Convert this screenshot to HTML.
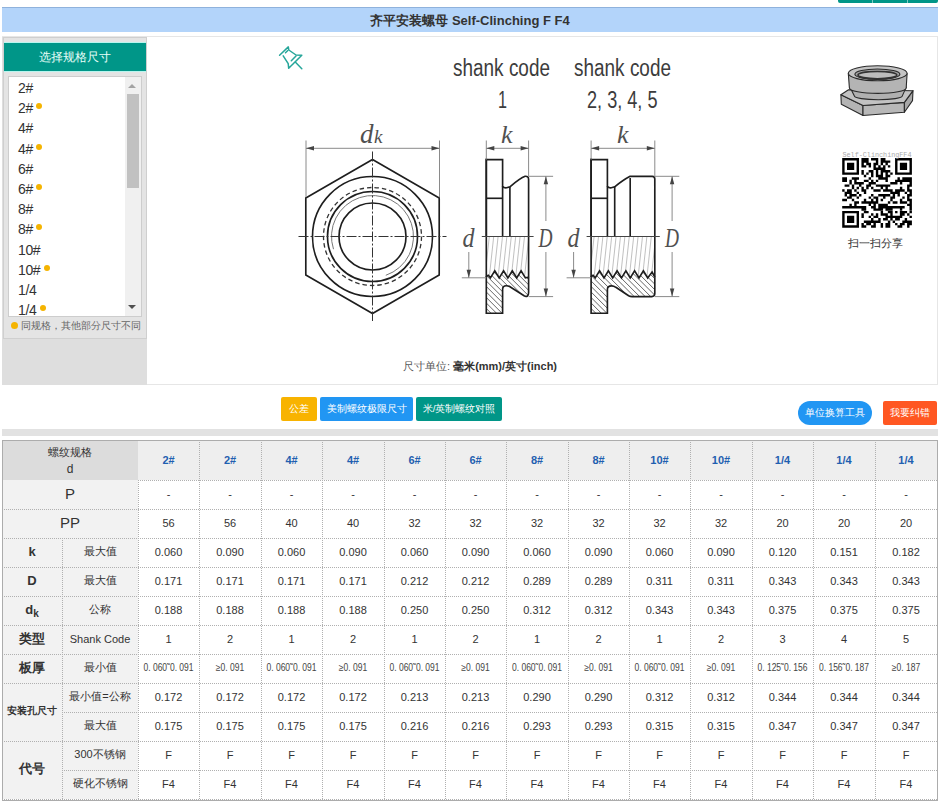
<!DOCTYPE html>
<html><head><meta charset="utf-8">
<style>
*{margin:0;padding:0;box-sizing:border-box}
html,body{width:943px;height:801px;overflow:hidden;background:#fff;font-family:"Liberation Sans",sans-serif;color:#333}
.abs{position:absolute}
#tabs{left:838px;top:0;width:100px;height:3px;background:#009688;border-radius:0 0 2px 2px}
#tabs i{position:absolute;top:0;width:1px;height:3px;background:#7fcac3}
#title{left:2px;top:7px;width:936px;height:25px;background:#b3d4fa;border-top:1px solid #8fb2dc;font-size:13px;font-weight:bold;text-align:center;line-height:26px;color:#333}
#box{left:2px;top:36px;width:936px;height:349px;border:1px solid #e6e6e6;background:#fff}
#leftcol{left:2px;top:37px;width:145px;height:348px;background:#dedede}
#panel{left:3px;top:37px;width:144px;height:302px;background:#e4e4e4;border:1px solid #cfcfcf}
#ghead{left:4px;top:42px;width:142px;height:30px;background:#009688;border-top:1px solid #b8f5ee;border-bottom:1px solid #b8f5ee;color:#e8fff8;font-size:12.2px;text-align:center;line-height:28px}
#list{left:8px;top:76px;width:134px;height:241px;background:#fff;border:1px solid #cdcdcd}
#list .it{position:absolute;left:9px;font-size:14px;color:#333;line-height:16px;letter-spacing:-0.4px}
#list .dot{display:inline-block;width:6px;height:6px;border-radius:50%;background:#f5b400;vertical-align:top;margin-left:3.5px;margin-top:3px}
#sb{left:125px;top:77px;width:16px;height:239px;background:#f0f0f0}
#thumb{left:127px;top:94px;width:12px;height:94px;background:#c1c1c1}
#legend{left:11px;top:320px;font-size:9.6px;color:#666;white-space:nowrap}
#legend b{display:inline-block;width:7px;height:7px;border-radius:50%;background:#f5b400;vertical-align:middle;margin-right:3px;position:relative;top:-1px}
.btn{position:absolute;color:#fff;font-size:9.6px;text-align:center;line-height:23px;height:24px;border-radius:2px;white-space:nowrap}
table{position:absolute;left:2px;top:440px;border-collapse:collapse;table-layout:fixed;width:936px}
.r{position:absolute}
.hd{position:absolute;height:0;border-top:1px dotted #b0b0b0}
.vd{position:absolute;width:0;border-left:1px dotted #b0b0b0}
.ob{position:absolute;border:1px solid #acacac}
.t{position:absolute;display:flex;align-items:center;justify-content:center;text-align:center;white-space:nowrap;color:#333}
.hb{font-weight:bold;color:#1f5fb0;font-size:11px}
.hl{font-size:11px;line-height:17px;padding-top:2px}
.hl b{font-weight:normal;font-size:12px}
.lp,.lb,.lbs,.ls,.dv,.dm{padding-bottom:2px}
.lp{font-size:15px}
.lb{font-size:13px;font-weight:bold}
.lbs{font-size:10px;font-weight:bold}
.ls{font-size:11px}
.dv{font-size:11px}
.dm{font-size:10px;transform:scaleX(0.85);color:#444}
.sb{font-size:10px;position:relative;top:4px}
</style></head>
<body>
<div id="tabs" class="abs"><i style="left:34px"></i><i style="left:69px"></i></div>
<div id="title" class="abs">齐平安装螺母 Self-Clinching F F4</div>
<div id="box" class="abs"></div>
<div id="leftcol" class="abs"></div>
<div id="panel" class="abs"></div>
<div id="ghead" class="abs">选择规格尺寸</div>
<div id="list" class="abs"><div class="it" style="top:3.0px">2#</div><div class="it" style="top:23.2px">2#<span class="dot"></span></div><div class="it" style="top:43.4px">4#</div><div class="it" style="top:63.6px">4#<span class="dot"></span></div><div class="it" style="top:83.8px">6#</div><div class="it" style="top:104.0px">6#<span class="dot"></span></div><div class="it" style="top:124.2px">8#</div><div class="it" style="top:144.4px">8#<span class="dot"></span></div><div class="it" style="top:164.6px">10#</div><div class="it" style="top:184.8px">10#<span class="dot"></span></div><div class="it" style="top:205.0px">1/4</div><div class="it" style="top:225.2px">1/4<span class="dot"></span></div></div>
<div id="sb" class="abs"></div>
<div id="thumb" class="abs"></div>
<div id="legend" class="abs"><b></b>同规格，其他部分尺寸不同</div>

<svg class="abs" style="left:0;top:0" width="943" height="801" viewBox="0 0 943 801"><path d="M372.5,159.5 L439.2,198.0 L439.2,275.0 L372.5,313.5 L305.8,275.0 L305.8,198.0 Z" stroke="#1e1e1e" stroke-width="1.65" fill="none"/>
<circle cx="372.5" cy="236.5" r="60" stroke="#1e1e1e" stroke-width="1.65" fill="none"/>
<circle cx="372.5" cy="236.5" r="45" stroke="#1e1e1e" stroke-width="1.65" fill="none"/>
<circle cx="372.5" cy="236.5" r="33.5" stroke="#1e1e1e" stroke-width="1.65" fill="none"/>
<circle cx="372.5" cy="236.5" r="49" stroke="#333" stroke-width="1.3" fill="none" stroke-dasharray="4.5 3"/>
<path d="M333.5,249.2 A41,41 0 1 1 385.8,275.3" stroke="#777" stroke-width="1" fill="none"/>
<line x1="298.5" y1="236.5" x2="446.5" y2="236.5" stroke="#333" stroke-width="1" fill="none" stroke-dasharray="10 2 2 2"/>
<line x1="372.5" y1="151.5" x2="372.5" y2="321" stroke="#333" stroke-width="1" fill="none" stroke-dasharray="10 2 2 2"/>
<line x1="306" y1="140.5" x2="306" y2="197" stroke="#8a8a8a" stroke-width="1" fill="none"/>
<line x1="439.5" y1="140.5" x2="439.5" y2="197" stroke="#8a8a8a" stroke-width="1" fill="none"/>
<line x1="306" y1="148.3" x2="439.5" y2="148.3" stroke="#8a8a8a" stroke-width="1" fill="none"/>
<path d="M306,148.3 l8,-2.2 l0,4.4 Z" fill="#444"/>
<path d="M439.5,148.3 l-8,-2.2 l0,4.4 Z" fill="#444"/>
<path d="M486.3,236.5 L486.3,159.6 L502.6,159.6 L502.6,186.5" stroke="#1e1e1e" stroke-width="1.65" fill="none"/>
<line x1="486.3" y1="198.3" x2="502.6" y2="198.3" stroke="#1e1e1e" stroke-width="1.65" fill="none"/>
<line x1="502.6" y1="186" x2="502.6" y2="236.5" stroke="#1e1e1e" stroke-width="1.65" fill="none"/>
<path d="M502.6,186.5 Q503.6,188 506.6,187.8 L509.90000000000003,186.8 Q520.3,178 525.1,176.3 Q528.6,176 528.6,179.5 L528.6,236.5" stroke="#1e1e1e" stroke-width="1.65" fill="none"/>
<line x1="509.90000000000003" y1="187" x2="509.90000000000003" y2="236.5" stroke="#1e1e1e" stroke-width="1.65" fill="none"/>
<line x1="486.3" y1="158.6" x2="486.3" y2="236.5" stroke="#1e1e1e" stroke-width="1.65" fill="none"/>
<clipPath id="c486a"><path d="M486.3,236.5 L528.6,236.5 L528.6,277.2 L525.4,277.9 L521.1,270.8 L516.7,277.9 L512.3,270.8 L507.9,277.9 L503.6,270.8 L499.2,277.9 L494.8,270.8 L490.4,277.9 L488.3,275.3 L486.3,276.2 Z"/></clipPath>
<clipPath id="c486b"><path d="M486.3,276.2 L486.3,313.2 L502.6,313.2 L502.6,289.5 Q502.6,285.7 506.1,285.7 Q508.1,285.7 509.6,286.5 L524.1,295.8 Q526.1,297 527.4,296 Q528.6,295 528.6,292.5 L528.6,277.2 L528.6,277.2 L525.4,277.9 L521.1,270.8 L516.7,277.9 L512.3,270.8 L507.9,277.9 L503.6,270.8 L499.2,277.9 L494.8,270.8 L490.4,277.9 L488.3,275.3 L486.3,276.2 Z"/></clipPath>
<g clip-path="url(#c486a)" stroke="#b0b0b0" stroke-width="0.8"><line x1="476.1" y1="236.5" x2="471.6" y2="278" /><line x1="480.5" y1="236.5" x2="476.0" y2="278" /><line x1="484.9" y1="236.5" x2="480.4" y2="278" /><line x1="489.3" y1="236.5" x2="484.8" y2="278" /><line x1="493.7" y1="236.5" x2="489.2" y2="278" /><line x1="498.1" y1="236.5" x2="493.6" y2="278" /><line x1="502.5" y1="236.5" x2="498.0" y2="278" /><line x1="506.9" y1="236.5" x2="502.4" y2="278" /><line x1="511.3" y1="236.5" x2="506.8" y2="278" /><line x1="515.7" y1="236.5" x2="511.2" y2="278" /><line x1="520.1" y1="236.5" x2="515.6" y2="278" /><line x1="524.5" y1="236.5" x2="520.0" y2="278" /><line x1="528.9" y1="236.5" x2="524.4" y2="278" /><line x1="533.3" y1="236.5" x2="528.8" y2="278" /><line x1="537.7" y1="236.5" x2="533.2" y2="278" /><line x1="542.1" y1="236.5" x2="537.6" y2="278" /><line x1="546.5" y1="236.5" x2="542.0" y2="278" /><line x1="550.9" y1="236.5" x2="546.4" y2="278" /><line x1="555.3" y1="236.5" x2="550.8" y2="278" /><line x1="559.7" y1="236.5" x2="555.2" y2="278" /><line x1="564.1" y1="236.5" x2="559.6" y2="278" /><line x1="568.5" y1="236.5" x2="564.0" y2="278" /><line x1="572.9" y1="236.5" x2="568.4" y2="278" /></g>
<g clip-path="url(#c486b)" stroke="#555" stroke-width="0.9"><line x1="420.3" y1="270" x2="464.3" y2="314" /><line x1="425.8" y1="270" x2="469.8" y2="314" /><line x1="431.3" y1="270" x2="475.3" y2="314" /><line x1="436.8" y1="270" x2="480.8" y2="314" /><line x1="442.3" y1="270" x2="486.3" y2="314" /><line x1="447.8" y1="270" x2="491.8" y2="314" /><line x1="453.3" y1="270" x2="497.3" y2="314" /><line x1="458.8" y1="270" x2="502.8" y2="314" /><line x1="464.3" y1="270" x2="508.3" y2="314" /><line x1="469.8" y1="270" x2="513.8" y2="314" /><line x1="475.3" y1="270" x2="519.3" y2="314" /><line x1="480.8" y1="270" x2="524.8" y2="314" /><line x1="486.3" y1="270" x2="530.3" y2="314" /><line x1="491.8" y1="270" x2="535.8" y2="314" /><line x1="497.3" y1="270" x2="541.3" y2="314" /><line x1="502.8" y1="270" x2="546.8" y2="314" /><line x1="508.3" y1="270" x2="552.3" y2="314" /><line x1="513.8" y1="270" x2="557.8" y2="314" /><line x1="519.3" y1="270" x2="563.3" y2="314" /><line x1="524.8" y1="270" x2="568.8" y2="314" /><line x1="530.3" y1="270" x2="574.3" y2="314" /><line x1="535.8" y1="270" x2="579.8" y2="314" /><line x1="541.3" y1="270" x2="585.3" y2="314" /><line x1="546.8" y1="270" x2="590.8" y2="314" /><line x1="552.3" y1="270" x2="596.3" y2="314" /><line x1="557.8" y1="270" x2="601.8" y2="314" /><line x1="563.3" y1="270" x2="607.3" y2="314" /><line x1="568.8" y1="270" x2="612.8" y2="314" /><line x1="574.3" y1="270" x2="618.3" y2="314" /><line x1="579.8" y1="270" x2="623.8" y2="314" /></g>
<path d="M486.3,276.2 L488.3,275.3 L490.4,277.9 L494.8,270.8 L499.2,277.9 L503.6,270.8 L507.9,277.9 L512.3,270.8 L516.7,277.9 L521.1,270.8 L525.4,277.9 L528.6,277.2" stroke="#1e1e1e" stroke-width="1.65" fill="none"/>
<path d="M486.3,276.2 L486.3,313.2 L502.6,313.2 L502.6,289.5 Q502.6,285.7 506.1,285.7 Q508.1,285.7 509.6,286.5 L524.1,295.8 Q526.1,297 527.4,296 Q528.6,295 528.6,292.5 L528.6,277.2" stroke="#1e1e1e" stroke-width="1.65" fill="none"/>
<line x1="486.3" y1="236.5" x2="486.3" y2="277" stroke="#1e1e1e" stroke-width="1.65" fill="none"/>
<line x1="528.6" y1="236.5" x2="528.6" y2="277.5" stroke="#1e1e1e" stroke-width="1.65" fill="none"/>
<line x1="481.8" y1="236.5" x2="533.6" y2="236.5" stroke="#444" stroke-width="1"/>
<line x1="486.3" y1="140.5" x2="486.3" y2="159.6" stroke="#8a8a8a" stroke-width="1" fill="none"/>
<line x1="528.6" y1="140.5" x2="528.6" y2="176.3" stroke="#8a8a8a" stroke-width="1" fill="none"/>
<line x1="486.3" y1="148.3" x2="528.6" y2="148.3" stroke="#8a8a8a" stroke-width="1" fill="none"/>
<path d="M486.3,148.3 l8,-2.2 l0,4.4 Z" fill="#444"/>
<path d="M528.6,148.3 l-8,-2.2 l0,4.4 Z" fill="#444"/>
<line x1="528.6" y1="176.3" x2="553.1" y2="176.3" stroke="#8a8a8a" stroke-width="1" fill="none"/>
<line x1="528.6" y1="296.6" x2="553.1" y2="296.6" stroke="#8a8a8a" stroke-width="1" fill="none"/>
<line x1="545.9" y1="176.3" x2="545.9" y2="221" stroke="#8a8a8a" stroke-width="1" fill="none"/>
<path d="M545.9,176.3 l-2.2,8 l4.4,0 Z" fill="#444"/>
<line x1="545.9" y1="252" x2="545.9" y2="296.6" stroke="#8a8a8a" stroke-width="1" fill="none"/>
<path d="M545.9,296.6 l-2.2,-8 l4.4,0 Z" fill="#444"/>
<line x1="461.8" y1="277.8" x2="486.3" y2="277.8" stroke="#8a8a8a" stroke-width="1" fill="none"/>
<line x1="468.8" y1="252" x2="468.8" y2="277.8" stroke="#8a8a8a" stroke-width="1" fill="none"/>
<path d="M468.8,277.8 l-2.2,-8 l4.4,0 Z" fill="#444"/>
<path d="M591.1,236.5 L591.1,159.6 L607.4,159.6 L607.4,186.5" stroke="#1e1e1e" stroke-width="1.65" fill="none"/>
<line x1="591.1" y1="198.3" x2="607.4" y2="198.3" stroke="#1e1e1e" stroke-width="1.65" fill="none"/>
<line x1="607.4" y1="186" x2="607.4" y2="236.5" stroke="#1e1e1e" stroke-width="1.65" fill="none"/>
<path d="M607.4,186.5 Q608.4,188 611.4,187.8 L614.6999999999999,186.8 Q623.1,180 630.1,176.3 L652.3000000000001,176.3 Q654.8000000000001,176.3 654.8000000000001,179 L654.8000000000001,236.5" stroke="#1e1e1e" stroke-width="1.65" fill="none"/>
<line x1="614.7" y1="187" x2="614.7" y2="236.5" stroke="#1e1e1e" stroke-width="1.65" fill="none"/>
<line x1="630.2" y1="178" x2="630.2" y2="236.5" stroke="#1e1e1e" stroke-width="1.65" fill="none"/>
<line x1="591.1" y1="158.6" x2="591.1" y2="236.5" stroke="#1e1e1e" stroke-width="1.65" fill="none"/>
<clipPath id="c591a"><path d="M591.1,236.5 L654.8000000000001,236.5 L654.8,277.2 L652.1,272.0 L647.7,277.9 L643.4,270.8 L639.0,277.9 L634.6,270.8 L630.2,277.9 L625.9,270.8 L621.5,277.9 L617.1,270.8 L612.7,277.9 L608.4,270.8 L604.0,277.9 L599.6,270.8 L595.2,277.9 L593.1,275.3 L591.1,276.2 Z"/></clipPath>
<clipPath id="c591b"><path d="M591.1,276.2 L591.1,313.2 L607.4,313.2 L607.4,289.5 Q607.4,285.8 611.4,285.8 Q613.9,285.8 615.9,287.3 L628.6,295.8 Q630.1,296.6 632.1,296.6 L651.8000000000001,296.6 Q654.8000000000001,296.6 654.8000000000001,293.6 L654.8000000000001,277.2 L654.8,277.2 L652.1,272.0 L647.7,277.9 L643.4,270.8 L639.0,277.9 L634.6,270.8 L630.2,277.9 L625.9,270.8 L621.5,277.9 L617.1,270.8 L612.7,277.9 L608.4,270.8 L604.0,277.9 L599.6,270.8 L595.2,277.9 L593.1,275.3 L591.1,276.2 Z"/></clipPath>
<g clip-path="url(#c591a)" stroke="#b0b0b0" stroke-width="0.8"><line x1="580.9" y1="236.5" x2="576.4" y2="278" /><line x1="585.3" y1="236.5" x2="580.8" y2="278" /><line x1="589.7" y1="236.5" x2="585.2" y2="278" /><line x1="594.1" y1="236.5" x2="589.6" y2="278" /><line x1="598.5" y1="236.5" x2="594.0" y2="278" /><line x1="602.9" y1="236.5" x2="598.4" y2="278" /><line x1="607.3" y1="236.5" x2="602.8" y2="278" /><line x1="611.7" y1="236.5" x2="607.2" y2="278" /><line x1="616.1" y1="236.5" x2="611.6" y2="278" /><line x1="620.5" y1="236.5" x2="616.0" y2="278" /><line x1="624.9" y1="236.5" x2="620.4" y2="278" /><line x1="629.3" y1="236.5" x2="624.8" y2="278" /><line x1="633.7" y1="236.5" x2="629.2" y2="278" /><line x1="638.1" y1="236.5" x2="633.6" y2="278" /><line x1="642.5" y1="236.5" x2="638.0" y2="278" /><line x1="646.9" y1="236.5" x2="642.4" y2="278" /><line x1="651.3" y1="236.5" x2="646.8" y2="278" /><line x1="655.7" y1="236.5" x2="651.2" y2="278" /><line x1="660.1" y1="236.5" x2="655.6" y2="278" /><line x1="664.5" y1="236.5" x2="660.0" y2="278" /><line x1="668.9" y1="236.5" x2="664.4" y2="278" /><line x1="673.3" y1="236.5" x2="668.8" y2="278" /><line x1="677.7" y1="236.5" x2="673.2" y2="278" /></g>
<g clip-path="url(#c591b)" stroke="#555" stroke-width="0.9"><line x1="525.1" y1="270" x2="569.1" y2="314" /><line x1="530.6" y1="270" x2="574.6" y2="314" /><line x1="536.1" y1="270" x2="580.1" y2="314" /><line x1="541.6" y1="270" x2="585.6" y2="314" /><line x1="547.1" y1="270" x2="591.1" y2="314" /><line x1="552.6" y1="270" x2="596.6" y2="314" /><line x1="558.1" y1="270" x2="602.1" y2="314" /><line x1="563.6" y1="270" x2="607.6" y2="314" /><line x1="569.1" y1="270" x2="613.1" y2="314" /><line x1="574.6" y1="270" x2="618.6" y2="314" /><line x1="580.1" y1="270" x2="624.1" y2="314" /><line x1="585.6" y1="270" x2="629.6" y2="314" /><line x1="591.1" y1="270" x2="635.1" y2="314" /><line x1="596.6" y1="270" x2="640.6" y2="314" /><line x1="602.1" y1="270" x2="646.1" y2="314" /><line x1="607.6" y1="270" x2="651.6" y2="314" /><line x1="613.1" y1="270" x2="657.1" y2="314" /><line x1="618.6" y1="270" x2="662.6" y2="314" /><line x1="624.1" y1="270" x2="668.1" y2="314" /><line x1="629.6" y1="270" x2="673.6" y2="314" /><line x1="635.1" y1="270" x2="679.1" y2="314" /><line x1="640.6" y1="270" x2="684.6" y2="314" /><line x1="646.1" y1="270" x2="690.1" y2="314" /><line x1="651.6" y1="270" x2="695.6" y2="314" /><line x1="657.1" y1="270" x2="701.1" y2="314" /><line x1="662.6" y1="270" x2="706.6" y2="314" /><line x1="668.1" y1="270" x2="712.1" y2="314" /><line x1="673.6" y1="270" x2="717.6" y2="314" /><line x1="679.1" y1="270" x2="723.1" y2="314" /><line x1="684.6" y1="270" x2="728.6" y2="314" /></g>
<path d="M591.1,276.2 L593.1,275.3 L595.2,277.9 L599.6,270.8 L604.0,277.9 L608.4,270.8 L612.7,277.9 L617.1,270.8 L621.5,277.9 L625.9,270.8 L630.2,277.9 L634.6,270.8 L639.0,277.9 L643.4,270.8 L647.7,277.9 L652.1,272.0 L654.8,277.2" stroke="#1e1e1e" stroke-width="1.65" fill="none"/>
<path d="M591.1,276.2 L591.1,313.2 L607.4,313.2 L607.4,289.5 Q607.4,285.8 611.4,285.8 Q613.9,285.8 615.9,287.3 L628.6,295.8 Q630.1,296.6 632.1,296.6 L651.8000000000001,296.6 Q654.8000000000001,296.6 654.8000000000001,293.6 L654.8000000000001,277.2" stroke="#1e1e1e" stroke-width="1.65" fill="none"/>
<line x1="591.1" y1="236.5" x2="591.1" y2="277" stroke="#1e1e1e" stroke-width="1.65" fill="none"/>
<line x1="654.8000000000001" y1="236.5" x2="654.8000000000001" y2="277.5" stroke="#1e1e1e" stroke-width="1.65" fill="none"/>
<line x1="586.6" y1="236.5" x2="659.8000000000001" y2="236.5" stroke="#444" stroke-width="1"/>
<line x1="591.1" y1="140.5" x2="591.1" y2="159.6" stroke="#8a8a8a" stroke-width="1" fill="none"/>
<line x1="654.8000000000001" y1="140.5" x2="654.8000000000001" y2="176.3" stroke="#8a8a8a" stroke-width="1" fill="none"/>
<line x1="591.1" y1="148.3" x2="654.8000000000001" y2="148.3" stroke="#8a8a8a" stroke-width="1" fill="none"/>
<path d="M591.1,148.3 l8,-2.2 l0,4.4 Z" fill="#444"/>
<path d="M654.8000000000001,148.3 l-8,-2.2 l0,4.4 Z" fill="#444"/>
<line x1="654.8000000000001" y1="176.3" x2="679.3000000000001" y2="176.3" stroke="#8a8a8a" stroke-width="1" fill="none"/>
<line x1="654.8000000000001" y1="296.6" x2="679.3000000000001" y2="296.6" stroke="#8a8a8a" stroke-width="1" fill="none"/>
<line x1="672.1" y1="176.3" x2="672.1" y2="221" stroke="#8a8a8a" stroke-width="1" fill="none"/>
<path d="M672.1,176.3 l-2.2,8 l4.4,0 Z" fill="#444"/>
<line x1="672.1" y1="252" x2="672.1" y2="296.6" stroke="#8a8a8a" stroke-width="1" fill="none"/>
<path d="M672.1,296.6 l-2.2,-8 l4.4,0 Z" fill="#444"/>
<line x1="566.6" y1="277.8" x2="591.1" y2="277.8" stroke="#8a8a8a" stroke-width="1" fill="none"/>
<line x1="573.6" y1="252" x2="573.6" y2="277.8" stroke="#8a8a8a" stroke-width="1" fill="none"/>
<path d="M573.6,277.8 l-2.2,-8 l4.4,0 Z" fill="#444"/>
<text x="360" y="143" font-size="27" font-family="Liberation Serif" font-style="italic" fill="#505050">d</text>
<text x="374" y="143" font-size="19" font-family="Liberation Serif" font-style="italic" fill="#505050">k</text>
<text x="501" y="143" font-size="26" font-family="Liberation Serif" font-style="italic" fill="#505050">k</text>
<text x="617" y="143" font-size="26" font-family="Liberation Serif" font-style="italic" fill="#505050">k</text>
<text x="462.5" y="246.5" font-size="28" font-family="Liberation Serif" font-style="italic" fill="#505050" textLength="12" lengthAdjust="spacingAndGlyphs">d</text>
<text x="567.5" y="246.5" font-size="28" font-family="Liberation Serif" font-style="italic" fill="#505050" textLength="12" lengthAdjust="spacingAndGlyphs">d</text>
<text x="538.5" y="247" font-size="28" font-family="Liberation Serif" font-style="italic" fill="#505050" textLength="14" lengthAdjust="spacingAndGlyphs">D</text>
<text x="665" y="247" font-size="28" font-family="Liberation Serif" font-style="italic" fill="#505050" textLength="14" lengthAdjust="spacingAndGlyphs">D</text>
<text x="453" y="75.8" font-size="23" font-family="Liberation Sans" fill="#3c3c3c" textLength="97" lengthAdjust="spacingAndGlyphs">shank code</text>
<text x="574" y="75.8" font-size="23" font-family="Liberation Sans" fill="#3c3c3c" textLength="97" lengthAdjust="spacingAndGlyphs">shank code</text>
<text x="498" y="107.6" font-size="23" font-family="Liberation Sans" fill="#3c3c3c" textLength="9" lengthAdjust="spacingAndGlyphs">1</text>
<text x="587" y="107.6" font-size="23" font-family="Liberation Sans" fill="#3c3c3c" textLength="70.5" lengthAdjust="spacingAndGlyphs">2, 3, 4, 5</text>
<g stroke="#26a69a" stroke-width="1.5" fill="none" stroke-linecap="round" stroke-linejoin="round"><path d="M279.6,55.3 L288.3,46.9 L288.8,50 L296,55 L301.8,55.3 L288.7,68.3 L288.2,63.7 L283.2,55.8"/><path d="M285.5,52.8 L287.8,50.5"/><path d="M291.3,60.7 L296,56"/><path d="M295.5,62.3 L301.8,68.8"/></g>
<path d="M840.9,94.7 L863.0,105.5 L863.0,115.5 L841.3,104.2 Z" fill="#b4b4b4" stroke="#2a2a2a" stroke-width="1.1" stroke-linejoin="round"/>
<path d="M863.0,105.5 L904.4,102.4 L904.4,112.3 L863.0,115.5 Z" fill="#b8b8b8" stroke="#2a2a2a" stroke-width="1.1" stroke-linejoin="round"/>
<path d="M904.4,102.4 L913.0,90.7 L912.5,100.6 L904.4,112.3 Z" fill="#a8a8a8" stroke="#2a2a2a" stroke-width="1.1" stroke-linejoin="round"/>
<path d="M840.9,94.7 L848.5,89.8 L913.0,90.7 L904.4,102.4 L863.0,105.5 Z" fill="#c2c2c2" stroke="#2a2a2a" stroke-width="1.1" stroke-linejoin="round"/>
<path d="M849.9,87.1 L854.4,96.1 A23.9,3.6 0 0 0 902.2,96.1 L906.2,87.1 Z" fill="#b0b0b0" stroke="#2a2a2a" stroke-width="1.1" stroke-linejoin="round"/>
<path d="M848.3,73.5 L849.4,88.0 A28.4,5.4 0 0 0 906.2,88.0 L907.1,73.5 Z" fill="#b4b4b4" stroke="#2a2a2a" stroke-width="1.1" stroke-linejoin="round"/>
<ellipse cx="877.7" cy="73.3" rx="29.4" ry="7.5" fill="#c4c4c4" stroke="#2a2a2a" stroke-width="1.1" stroke-linejoin="round"/>
<ellipse cx="877.4" cy="74.2" rx="22.5" ry="5.2" fill="#a0a0a0" stroke="#2a2a2a" stroke-width="1.1" stroke-linejoin="round"/>
<ellipse cx="877.4" cy="75.1" rx="19.4" ry="3.6" fill="#bdbdbd" stroke="#333" stroke-width="1.6"/>
<path fill="#000" d="M842.20,158.00h16.82v2.40h-16.82zM861.43,158.00h7.21v2.40h-7.21zM871.04,158.00h7.21v2.40h-7.21zM880.66,158.00h4.81v2.40h-4.81zM895.08,158.00h16.82v2.40h-16.82zM842.20,160.40h2.40v2.40h-2.40zM856.62,160.40h2.40v2.40h-2.40zM861.43,160.40h7.21v2.40h-7.21zM875.85,160.40h2.40v2.40h-2.40zM880.66,160.40h9.61v2.40h-9.61zM895.08,160.40h2.40v2.40h-2.40zM909.50,160.40h2.40v2.40h-2.40zM842.20,162.81h2.40v2.40h-2.40zM847.01,162.81h7.21v2.40h-7.21zM856.62,162.81h2.40v2.40h-2.40zM861.43,162.81h2.40v2.40h-2.40zM866.23,162.81h4.81v2.40h-4.81zM873.44,162.81h4.81v2.40h-4.81zM880.66,162.81h2.40v2.40h-2.40zM885.46,162.81h2.40v2.40h-2.40zM895.08,162.81h2.40v2.40h-2.40zM899.88,162.81h7.21v2.40h-7.21zM909.50,162.81h2.40v2.40h-2.40zM842.20,165.21h2.40v2.40h-2.40zM847.01,165.21h7.21v2.40h-7.21zM856.62,165.21h2.40v2.40h-2.40zM861.43,165.21h4.81v2.40h-4.81zM868.64,165.21h2.40v2.40h-2.40zM873.44,165.21h2.40v2.40h-2.40zM878.25,165.21h2.40v2.40h-2.40zM883.06,165.21h2.40v2.40h-2.40zM887.87,165.21h2.40v2.40h-2.40zM895.08,165.21h2.40v2.40h-2.40zM899.88,165.21h7.21v2.40h-7.21zM909.50,165.21h2.40v2.40h-2.40zM842.20,167.61h2.40v2.40h-2.40zM847.01,167.61h7.21v2.40h-7.21zM856.62,167.61h2.40v2.40h-2.40zM873.44,167.61h12.02v2.40h-12.02zM895.08,167.61h2.40v2.40h-2.40zM899.88,167.61h7.21v2.40h-7.21zM909.50,167.61h2.40v2.40h-2.40zM842.20,170.02h2.40v2.40h-2.40zM856.62,170.02h2.40v2.40h-2.40zM861.43,170.02h2.40v2.40h-2.40zM868.64,170.02h4.81v2.40h-4.81zM875.85,170.02h2.40v2.40h-2.40zM880.66,170.02h9.61v2.40h-9.61zM895.08,170.02h2.40v2.40h-2.40zM909.50,170.02h2.40v2.40h-2.40zM842.20,172.42h16.82v2.40h-16.82zM861.43,172.42h2.40v2.40h-2.40zM866.23,172.42h2.40v2.40h-2.40zM871.04,172.42h2.40v2.40h-2.40zM875.85,172.42h2.40v2.40h-2.40zM880.66,172.42h2.40v2.40h-2.40zM885.46,172.42h2.40v2.40h-2.40zM890.27,172.42h2.40v2.40h-2.40zM895.08,172.42h16.82v2.40h-16.82zM863.83,174.82h2.40v2.40h-2.40zM871.04,174.82h2.40v2.40h-2.40zM875.85,174.82h7.21v2.40h-7.21zM885.46,174.82h4.81v2.40h-4.81zM842.20,177.23h4.81v2.40h-4.81zM851.81,177.23h7.21v2.40h-7.21zM868.64,177.23h2.40v2.40h-2.40zM878.25,177.23h9.61v2.40h-9.61zM897.48,177.23h2.40v2.40h-2.40zM902.29,177.23h9.61v2.40h-9.61zM842.20,179.63h4.81v2.40h-4.81zM849.41,179.63h2.40v2.40h-2.40zM854.22,179.63h2.40v2.40h-2.40zM863.83,179.63h4.81v2.40h-4.81zM871.04,179.63h2.40v2.40h-2.40zM875.85,179.63h2.40v2.40h-2.40zM885.46,179.63h2.40v2.40h-2.40zM895.08,179.63h16.82v2.40h-16.82zM849.41,182.03h2.40v2.40h-2.40zM854.22,182.03h9.61v2.40h-9.61zM868.64,182.03h7.21v2.40h-7.21zM890.27,182.03h7.21v2.40h-7.21zM899.88,182.03h2.40v2.40h-2.40zM909.50,182.03h2.40v2.40h-2.40zM844.60,184.44h4.81v2.40h-4.81zM851.81,184.44h2.40v2.40h-2.40zM859.02,184.44h2.40v2.40h-2.40zM866.23,184.44h4.81v2.40h-4.81zM875.85,184.44h14.42v2.40h-14.42zM907.09,184.44h4.81v2.40h-4.81zM851.81,186.84h2.40v2.40h-2.40zM856.62,186.84h2.40v2.40h-2.40zM861.43,186.84h2.40v2.40h-2.40zM866.23,186.84h2.40v2.40h-2.40zM871.04,186.84h2.40v2.40h-2.40zM880.66,186.84h2.40v2.40h-2.40zM885.46,186.84h2.40v2.40h-2.40zM899.88,186.84h2.40v2.40h-2.40zM907.09,186.84h2.40v2.40h-2.40zM842.20,189.24h2.40v2.40h-2.40zM847.01,189.24h4.81v2.40h-4.81zM854.22,189.24h2.40v2.40h-2.40zM861.43,189.24h4.81v2.40h-4.81zM873.44,189.24h7.21v2.40h-7.21zM883.06,189.24h9.61v2.40h-9.61zM895.08,189.24h9.61v2.40h-9.61zM907.09,189.24h4.81v2.40h-4.81zM844.60,191.65h7.21v2.40h-7.21zM856.62,191.65h2.40v2.40h-2.40zM863.83,191.65h2.40v2.40h-2.40zM890.27,191.65h9.61v2.40h-9.61zM904.69,191.65h2.40v2.40h-2.40zM909.50,191.65h2.40v2.40h-2.40zM844.60,194.05h2.40v2.40h-2.40zM849.41,194.05h7.21v2.40h-7.21zM859.02,194.05h2.40v2.40h-2.40zM871.04,194.05h2.40v2.40h-2.40zM878.25,194.05h12.02v2.40h-12.02zM892.67,194.05h2.40v2.40h-2.40zM897.48,194.05h2.40v2.40h-2.40zM907.09,194.05h4.81v2.40h-4.81zM847.01,196.46h4.81v2.40h-4.81zM856.62,196.46h2.40v2.40h-2.40zM868.64,196.46h2.40v2.40h-2.40zM873.44,196.46h4.81v2.40h-4.81zM883.06,196.46h2.40v2.40h-2.40zM890.27,196.46h4.81v2.40h-4.81zM902.29,196.46h2.40v2.40h-2.40zM907.09,196.46h2.40v2.40h-2.40zM842.20,198.86h4.81v2.40h-4.81zM851.81,198.86h2.40v2.40h-2.40zM863.83,198.86h2.40v2.40h-2.40zM871.04,198.86h2.40v2.40h-2.40zM875.85,198.86h2.40v2.40h-2.40zM880.66,198.86h2.40v2.40h-2.40zM890.27,198.86h2.40v2.40h-2.40zM899.88,198.86h2.40v2.40h-2.40zM907.09,198.86h4.81v2.40h-4.81zM854.22,201.26h4.81v2.40h-4.81zM861.43,201.26h16.82v2.40h-16.82zM887.87,201.26h2.40v2.40h-2.40zM892.67,201.26h4.81v2.40h-4.81zM899.88,201.26h7.21v2.40h-7.21zM909.50,201.26h2.40v2.40h-2.40zM849.41,203.67h2.40v2.40h-2.40zM854.22,203.67h2.40v2.40h-2.40zM868.64,203.67h2.40v2.40h-2.40zM873.44,203.67h2.40v2.40h-2.40zM878.25,203.67h9.61v2.40h-9.61zM907.09,203.67h4.81v2.40h-4.81zM842.20,206.07h24.03v2.40h-24.03zM871.04,206.07h4.81v2.40h-4.81zM878.25,206.07h26.44v2.40h-26.44zM909.50,206.07h2.40v2.40h-2.40zM861.43,208.47h4.81v2.40h-4.81zM873.44,208.47h9.61v2.40h-9.61zM885.46,208.47h7.21v2.40h-7.21zM899.88,208.47h2.40v2.40h-2.40zM909.50,208.47h2.40v2.40h-2.40zM842.20,210.88h16.82v2.40h-16.82zM863.83,210.88h4.81v2.40h-4.81zM880.66,210.88h2.40v2.40h-2.40zM887.87,210.88h4.81v2.40h-4.81zM895.08,210.88h2.40v2.40h-2.40zM899.88,210.88h7.21v2.40h-7.21zM909.50,210.88h2.40v2.40h-2.40zM842.20,213.28h2.40v2.40h-2.40zM856.62,213.28h2.40v2.40h-2.40zM861.43,213.28h2.40v2.40h-2.40zM871.04,213.28h2.40v2.40h-2.40zM875.85,213.28h2.40v2.40h-2.40zM880.66,213.28h7.21v2.40h-7.21zM890.27,213.28h2.40v2.40h-2.40zM899.88,213.28h4.81v2.40h-4.81zM907.09,213.28h2.40v2.40h-2.40zM842.20,215.68h2.40v2.40h-2.40zM847.01,215.68h7.21v2.40h-7.21zM856.62,215.68h2.40v2.40h-2.40zM861.43,215.68h2.40v2.40h-2.40zM868.64,215.68h2.40v2.40h-2.40zM873.44,215.68h4.81v2.40h-4.81zM885.46,215.68h16.82v2.40h-16.82zM909.50,215.68h2.40v2.40h-2.40zM842.20,218.09h2.40v2.40h-2.40zM847.01,218.09h7.21v2.40h-7.21zM856.62,218.09h2.40v2.40h-2.40zM871.04,218.09h2.40v2.40h-2.40zM878.25,218.09h2.40v2.40h-2.40zM883.06,218.09h4.81v2.40h-4.81zM890.27,218.09h2.40v2.40h-2.40zM895.08,218.09h4.81v2.40h-4.81zM904.69,218.09h2.40v2.40h-2.40zM842.20,220.49h2.40v2.40h-2.40zM847.01,220.49h7.21v2.40h-7.21zM856.62,220.49h2.40v2.40h-2.40zM863.83,220.49h16.82v2.40h-16.82zM887.87,220.49h2.40v2.40h-2.40zM892.67,220.49h2.40v2.40h-2.40zM902.29,220.49h9.61v2.40h-9.61zM842.20,222.89h2.40v2.40h-2.40zM856.62,222.89h2.40v2.40h-2.40zM861.43,222.89h2.40v2.40h-2.40zM866.23,222.89h4.81v2.40h-4.81zM873.44,222.89h2.40v2.40h-2.40zM880.66,222.89h2.40v2.40h-2.40zM885.46,222.89h4.81v2.40h-4.81zM895.08,222.89h2.40v2.40h-2.40zM899.88,222.89h4.81v2.40h-4.81zM907.09,222.89h4.81v2.40h-4.81zM842.20,225.30h16.82v2.40h-16.82zM861.43,225.30h4.81v2.40h-4.81zM871.04,225.30h4.81v2.40h-4.81zM880.66,225.30h2.40v2.40h-2.40zM885.46,225.30h4.81v2.40h-4.81zM897.48,225.30h4.81v2.40h-4.81zM907.09,225.30h2.40v2.40h-2.40z"/><text x="842.5" y="156.5" font-family="Liberation Mono" font-size="6.4" fill="#aaa" textLength="69" lengthAdjust="spacingAndGlyphs">Self-ClinchingFF4</text></svg>
<div class="abs" style="left:848px;top:236px;font-size:11px;color:#333;white-space:nowrap">扫一扫分享</div>
<div class="abs" style="left:403px;top:359px;font-size:11px;color:#555;white-space:nowrap">尺寸单位: <b style="color:#333">毫米(mm)/英寸(inch)</b></div>
<div class="abs" style="left:128px;top:84px;width:0;height:0;border-left:4px solid transparent;border-right:4px solid transparent;border-bottom:4px solid #a3a3a3"></div>
<div class="abs" style="left:128px;top:305px;width:0;height:0;border-left:4px solid transparent;border-right:4px solid transparent;border-top:4px solid #505050"></div>

<div class="btn" style="left:281px;top:397px;width:36px;background:#f8b300">公差</div>
<div class="btn" style="left:320px;top:397px;width:93px;background:#2196f3">美制螺纹极限尺寸</div>
<div class="btn" style="left:416px;top:397px;width:86px;background:#009688">米/英制螺纹对照</div>
<div class="btn" style="left:798px;top:401px;width:74px;background:#2196f3;border-radius:12px">单位换算工具</div>
<div class="btn" style="left:883px;top:401px;width:54px;background:#ff5722">我要纠错</div>
<div class="abs" style="left:2px;top:429px;width:936px;height:7px;background:#e2e2e2"></div>
<div class="r" style="left:2px;top:440px;width:935px;height:359px;background:#fff"></div>
<div class="r" style="left:3px;top:441px;width:135px;height:39px;background:#dcdcdc"></div>
<div class="r" style="left:138px;top:441px;width:799px;height:39px;background:#eeeeee"></div>
<div class="r" style="left:3px;top:480px;width:135px;height:319px;background:#f2f2f2"></div>
<div class="hd" style="left:138px;top:480px;width:799px"></div>
<div class="hd" style="left:2px;top:509px;width:935px"></div>
<div class="hd" style="left:2px;top:538px;width:935px"></div>
<div class="hd" style="left:2px;top:567px;width:935px"></div>
<div class="hd" style="left:2px;top:596px;width:935px"></div>
<div class="hd" style="left:2px;top:625px;width:935px"></div>
<div class="hd" style="left:2px;top:654px;width:935px"></div>
<div class="hd" style="left:2px;top:683px;width:935px"></div>
<div class="hd" style="left:62px;top:712px;width:875px"></div>
<div class="hd" style="left:2px;top:741px;width:935px"></div>
<div class="hd" style="left:62px;top:770px;width:875px"></div>
<div class="vd" style="left:199px;top:440px;height:359px"></div>
<div class="vd" style="left:261px;top:440px;height:359px"></div>
<div class="vd" style="left:322px;top:440px;height:359px"></div>
<div class="vd" style="left:384px;top:440px;height:359px"></div>
<div class="vd" style="left:445px;top:440px;height:359px"></div>
<div class="vd" style="left:506px;top:440px;height:359px"></div>
<div class="vd" style="left:568px;top:440px;height:359px"></div>
<div class="vd" style="left:629px;top:440px;height:359px"></div>
<div class="vd" style="left:690px;top:440px;height:359px"></div>
<div class="vd" style="left:752px;top:440px;height:359px"></div>
<div class="vd" style="left:813px;top:440px;height:359px"></div>
<div class="vd" style="left:875px;top:440px;height:359px"></div>
<div class="vd" style="left:138px;top:480px;height:319px"></div>
<div class="vd" style="left:62px;top:538px;height:261px"></div>
<div class="ob" style="left:2px;top:440px;width:936px;height:361px"></div>
<div class="hd" style="left:2px;top:799px;width:935px"></div>
<div class="t hb" style="left:138px;top:440px;width:61px;height:40px">2#</div>
<div class="t hb" style="left:199px;top:440px;width:62px;height:40px">2#</div>
<div class="t hb" style="left:261px;top:440px;width:61px;height:40px">4#</div>
<div class="t hb" style="left:322px;top:440px;width:62px;height:40px">4#</div>
<div class="t hb" style="left:384px;top:440px;width:61px;height:40px">6#</div>
<div class="t hb" style="left:445px;top:440px;width:61px;height:40px">6#</div>
<div class="t hb" style="left:506px;top:440px;width:62px;height:40px">8#</div>
<div class="t hb" style="left:568px;top:440px;width:61px;height:40px">8#</div>
<div class="t hb" style="left:629px;top:440px;width:61px;height:40px">10#</div>
<div class="t hb" style="left:690px;top:440px;width:62px;height:40px">10#</div>
<div class="t hb" style="left:752px;top:440px;width:61px;height:40px">1/4</div>
<div class="t hb" style="left:813px;top:440px;width:62px;height:40px">1/4</div>
<div class="t hb" style="left:875px;top:440px;width:62px;height:40px">1/4</div>
<div class="t hl" style="left:2px;top:440px;width:136px;height:40px"><div>螺纹规格<br><b>d</b></div></div>
<div class="t lp" style="left:2px;top:480px;width:136px;height:29px">P</div>
<div class="t dv" style="left:138px;top:480px;width:61px;height:29px">-</div>
<div class="t dv" style="left:199px;top:480px;width:62px;height:29px">-</div>
<div class="t dv" style="left:261px;top:480px;width:61px;height:29px">-</div>
<div class="t dv" style="left:322px;top:480px;width:62px;height:29px">-</div>
<div class="t dv" style="left:384px;top:480px;width:61px;height:29px">-</div>
<div class="t dv" style="left:445px;top:480px;width:61px;height:29px">-</div>
<div class="t dv" style="left:506px;top:480px;width:62px;height:29px">-</div>
<div class="t dv" style="left:568px;top:480px;width:61px;height:29px">-</div>
<div class="t dv" style="left:629px;top:480px;width:61px;height:29px">-</div>
<div class="t dv" style="left:690px;top:480px;width:62px;height:29px">-</div>
<div class="t dv" style="left:752px;top:480px;width:61px;height:29px">-</div>
<div class="t dv" style="left:813px;top:480px;width:62px;height:29px">-</div>
<div class="t dv" style="left:875px;top:480px;width:62px;height:29px">-</div>
<div class="t lp" style="left:2px;top:509px;width:136px;height:29px">PP</div>
<div class="t dv" style="left:138px;top:509px;width:61px;height:29px">56</div>
<div class="t dv" style="left:199px;top:509px;width:62px;height:29px">56</div>
<div class="t dv" style="left:261px;top:509px;width:61px;height:29px">40</div>
<div class="t dv" style="left:322px;top:509px;width:62px;height:29px">40</div>
<div class="t dv" style="left:384px;top:509px;width:61px;height:29px">32</div>
<div class="t dv" style="left:445px;top:509px;width:61px;height:29px">32</div>
<div class="t dv" style="left:506px;top:509px;width:62px;height:29px">32</div>
<div class="t dv" style="left:568px;top:509px;width:61px;height:29px">32</div>
<div class="t dv" style="left:629px;top:509px;width:61px;height:29px">32</div>
<div class="t dv" style="left:690px;top:509px;width:62px;height:29px">32</div>
<div class="t dv" style="left:752px;top:509px;width:61px;height:29px">20</div>
<div class="t dv" style="left:813px;top:509px;width:62px;height:29px">20</div>
<div class="t dv" style="left:875px;top:509px;width:62px;height:29px">20</div>
<div class="t lb" style="left:2px;top:538px;width:60px;height:29px">k</div>
<div class="t ls" style="left:62px;top:538px;width:76px;height:29px">最大值</div>
<div class="t dv" style="left:138px;top:538px;width:61px;height:29px">0.060</div>
<div class="t dv" style="left:199px;top:538px;width:62px;height:29px">0.090</div>
<div class="t dv" style="left:261px;top:538px;width:61px;height:29px">0.060</div>
<div class="t dv" style="left:322px;top:538px;width:62px;height:29px">0.090</div>
<div class="t dv" style="left:384px;top:538px;width:61px;height:29px">0.060</div>
<div class="t dv" style="left:445px;top:538px;width:61px;height:29px">0.090</div>
<div class="t dv" style="left:506px;top:538px;width:62px;height:29px">0.060</div>
<div class="t dv" style="left:568px;top:538px;width:61px;height:29px">0.090</div>
<div class="t dv" style="left:629px;top:538px;width:61px;height:29px">0.060</div>
<div class="t dv" style="left:690px;top:538px;width:62px;height:29px">0.090</div>
<div class="t dv" style="left:752px;top:538px;width:61px;height:29px">0.120</div>
<div class="t dv" style="left:813px;top:538px;width:62px;height:29px">0.151</div>
<div class="t dv" style="left:875px;top:538px;width:62px;height:29px">0.182</div>
<div class="t lb" style="left:2px;top:567px;width:60px;height:29px">D</div>
<div class="t ls" style="left:62px;top:567px;width:76px;height:29px">最大值</div>
<div class="t dv" style="left:138px;top:567px;width:61px;height:29px">0.171</div>
<div class="t dv" style="left:199px;top:567px;width:62px;height:29px">0.171</div>
<div class="t dv" style="left:261px;top:567px;width:61px;height:29px">0.171</div>
<div class="t dv" style="left:322px;top:567px;width:62px;height:29px">0.171</div>
<div class="t dv" style="left:384px;top:567px;width:61px;height:29px">0.212</div>
<div class="t dv" style="left:445px;top:567px;width:61px;height:29px">0.212</div>
<div class="t dv" style="left:506px;top:567px;width:62px;height:29px">0.289</div>
<div class="t dv" style="left:568px;top:567px;width:61px;height:29px">0.289</div>
<div class="t dv" style="left:629px;top:567px;width:61px;height:29px">0.311</div>
<div class="t dv" style="left:690px;top:567px;width:62px;height:29px">0.311</div>
<div class="t dv" style="left:752px;top:567px;width:61px;height:29px">0.343</div>
<div class="t dv" style="left:813px;top:567px;width:62px;height:29px">0.343</div>
<div class="t dv" style="left:875px;top:567px;width:62px;height:29px">0.343</div>
<div class="t lb" style="left:2px;top:596px;width:60px;height:29px">d<span class="sb">k</span></div>
<div class="t ls" style="left:62px;top:596px;width:76px;height:29px">公称</div>
<div class="t dv" style="left:138px;top:596px;width:61px;height:29px">0.188</div>
<div class="t dv" style="left:199px;top:596px;width:62px;height:29px">0.188</div>
<div class="t dv" style="left:261px;top:596px;width:61px;height:29px">0.188</div>
<div class="t dv" style="left:322px;top:596px;width:62px;height:29px">0.188</div>
<div class="t dv" style="left:384px;top:596px;width:61px;height:29px">0.250</div>
<div class="t dv" style="left:445px;top:596px;width:61px;height:29px">0.250</div>
<div class="t dv" style="left:506px;top:596px;width:62px;height:29px">0.312</div>
<div class="t dv" style="left:568px;top:596px;width:61px;height:29px">0.312</div>
<div class="t dv" style="left:629px;top:596px;width:61px;height:29px">0.343</div>
<div class="t dv" style="left:690px;top:596px;width:62px;height:29px">0.343</div>
<div class="t dv" style="left:752px;top:596px;width:61px;height:29px">0.375</div>
<div class="t dv" style="left:813px;top:596px;width:62px;height:29px">0.375</div>
<div class="t dv" style="left:875px;top:596px;width:62px;height:29px">0.375</div>
<div class="t lb" style="left:2px;top:625px;width:60px;height:29px">类型</div>
<div class="t ls" style="left:62px;top:625px;width:76px;height:29px">Shank Code</div>
<div class="t dv" style="left:138px;top:625px;width:61px;height:29px">1</div>
<div class="t dv" style="left:199px;top:625px;width:62px;height:29px">2</div>
<div class="t dv" style="left:261px;top:625px;width:61px;height:29px">1</div>
<div class="t dv" style="left:322px;top:625px;width:62px;height:29px">2</div>
<div class="t dv" style="left:384px;top:625px;width:61px;height:29px">1</div>
<div class="t dv" style="left:445px;top:625px;width:61px;height:29px">2</div>
<div class="t dv" style="left:506px;top:625px;width:62px;height:29px">1</div>
<div class="t dv" style="left:568px;top:625px;width:61px;height:29px">2</div>
<div class="t dv" style="left:629px;top:625px;width:61px;height:29px">1</div>
<div class="t dv" style="left:690px;top:625px;width:62px;height:29px">2</div>
<div class="t dv" style="left:752px;top:625px;width:61px;height:29px">3</div>
<div class="t dv" style="left:813px;top:625px;width:62px;height:29px">4</div>
<div class="t dv" style="left:875px;top:625px;width:62px;height:29px">5</div>
<div class="t lb" style="left:2px;top:654px;width:60px;height:29px">板厚</div>
<div class="t ls" style="left:62px;top:654px;width:76px;height:29px">最小值</div>
<div class="t dm" style="left:138px;top:654px;width:61px;height:29px">0. 060˜0. 091</div>
<div class="t dm" style="left:199px;top:654px;width:62px;height:29px">≥0. 091</div>
<div class="t dm" style="left:261px;top:654px;width:61px;height:29px">0. 060˜0. 091</div>
<div class="t dm" style="left:322px;top:654px;width:62px;height:29px">≥0. 091</div>
<div class="t dm" style="left:384px;top:654px;width:61px;height:29px">0. 060˜0. 091</div>
<div class="t dm" style="left:445px;top:654px;width:61px;height:29px">≥0. 091</div>
<div class="t dm" style="left:506px;top:654px;width:62px;height:29px">0. 060˜0. 091</div>
<div class="t dm" style="left:568px;top:654px;width:61px;height:29px">≥0. 091</div>
<div class="t dm" style="left:629px;top:654px;width:61px;height:29px">0. 060˜0. 091</div>
<div class="t dm" style="left:690px;top:654px;width:62px;height:29px">≥0. 091</div>
<div class="t dm" style="left:752px;top:654px;width:61px;height:29px">0. 125˜0. 156</div>
<div class="t dm" style="left:813px;top:654px;width:62px;height:29px">0. 156˜0. 187</div>
<div class="t dm" style="left:875px;top:654px;width:62px;height:29px">≥0. 187</div>
<div class="t lbs" style="left:2px;top:683px;width:60px;height:58px">安装孔尺寸</div>
<div class="t ls" style="left:62px;top:683px;width:76px;height:29px">最小值=公称</div>
<div class="t dv" style="left:138px;top:683px;width:61px;height:29px">0.172</div>
<div class="t dv" style="left:199px;top:683px;width:62px;height:29px">0.172</div>
<div class="t dv" style="left:261px;top:683px;width:61px;height:29px">0.172</div>
<div class="t dv" style="left:322px;top:683px;width:62px;height:29px">0.172</div>
<div class="t dv" style="left:384px;top:683px;width:61px;height:29px">0.213</div>
<div class="t dv" style="left:445px;top:683px;width:61px;height:29px">0.213</div>
<div class="t dv" style="left:506px;top:683px;width:62px;height:29px">0.290</div>
<div class="t dv" style="left:568px;top:683px;width:61px;height:29px">0.290</div>
<div class="t dv" style="left:629px;top:683px;width:61px;height:29px">0.312</div>
<div class="t dv" style="left:690px;top:683px;width:62px;height:29px">0.312</div>
<div class="t dv" style="left:752px;top:683px;width:61px;height:29px">0.344</div>
<div class="t dv" style="left:813px;top:683px;width:62px;height:29px">0.344</div>
<div class="t dv" style="left:875px;top:683px;width:62px;height:29px">0.344</div>
<div class="t ls" style="left:62px;top:712px;width:76px;height:29px">最大值</div>
<div class="t dv" style="left:138px;top:712px;width:61px;height:29px">0.175</div>
<div class="t dv" style="left:199px;top:712px;width:62px;height:29px">0.175</div>
<div class="t dv" style="left:261px;top:712px;width:61px;height:29px">0.175</div>
<div class="t dv" style="left:322px;top:712px;width:62px;height:29px">0.175</div>
<div class="t dv" style="left:384px;top:712px;width:61px;height:29px">0.216</div>
<div class="t dv" style="left:445px;top:712px;width:61px;height:29px">0.216</div>
<div class="t dv" style="left:506px;top:712px;width:62px;height:29px">0.293</div>
<div class="t dv" style="left:568px;top:712px;width:61px;height:29px">0.293</div>
<div class="t dv" style="left:629px;top:712px;width:61px;height:29px">0.315</div>
<div class="t dv" style="left:690px;top:712px;width:62px;height:29px">0.315</div>
<div class="t dv" style="left:752px;top:712px;width:61px;height:29px">0.347</div>
<div class="t dv" style="left:813px;top:712px;width:62px;height:29px">0.347</div>
<div class="t dv" style="left:875px;top:712px;width:62px;height:29px">0.347</div>
<div class="t lb" style="left:2px;top:741px;width:60px;height:58px">代号</div>
<div class="t ls" style="left:62px;top:741px;width:76px;height:29px">300不锈钢</div>
<div class="t dv" style="left:138px;top:741px;width:61px;height:29px">F</div>
<div class="t dv" style="left:199px;top:741px;width:62px;height:29px">F</div>
<div class="t dv" style="left:261px;top:741px;width:61px;height:29px">F</div>
<div class="t dv" style="left:322px;top:741px;width:62px;height:29px">F</div>
<div class="t dv" style="left:384px;top:741px;width:61px;height:29px">F</div>
<div class="t dv" style="left:445px;top:741px;width:61px;height:29px">F</div>
<div class="t dv" style="left:506px;top:741px;width:62px;height:29px">F</div>
<div class="t dv" style="left:568px;top:741px;width:61px;height:29px">F</div>
<div class="t dv" style="left:629px;top:741px;width:61px;height:29px">F</div>
<div class="t dv" style="left:690px;top:741px;width:62px;height:29px">F</div>
<div class="t dv" style="left:752px;top:741px;width:61px;height:29px">F</div>
<div class="t dv" style="left:813px;top:741px;width:62px;height:29px">F</div>
<div class="t dv" style="left:875px;top:741px;width:62px;height:29px">F</div>
<div class="t ls" style="left:62px;top:770px;width:76px;height:29px">硬化不锈钢</div>
<div class="t dv" style="left:138px;top:770px;width:61px;height:29px">F4</div>
<div class="t dv" style="left:199px;top:770px;width:62px;height:29px">F4</div>
<div class="t dv" style="left:261px;top:770px;width:61px;height:29px">F4</div>
<div class="t dv" style="left:322px;top:770px;width:62px;height:29px">F4</div>
<div class="t dv" style="left:384px;top:770px;width:61px;height:29px">F4</div>
<div class="t dv" style="left:445px;top:770px;width:61px;height:29px">F4</div>
<div class="t dv" style="left:506px;top:770px;width:62px;height:29px">F4</div>
<div class="t dv" style="left:568px;top:770px;width:61px;height:29px">F4</div>
<div class="t dv" style="left:629px;top:770px;width:61px;height:29px">F4</div>
<div class="t dv" style="left:690px;top:770px;width:62px;height:29px">F4</div>
<div class="t dv" style="left:752px;top:770px;width:61px;height:29px">F4</div>
<div class="t dv" style="left:813px;top:770px;width:62px;height:29px">F4</div>
<div class="t dv" style="left:875px;top:770px;width:62px;height:29px">F4</div>
</body></html>
